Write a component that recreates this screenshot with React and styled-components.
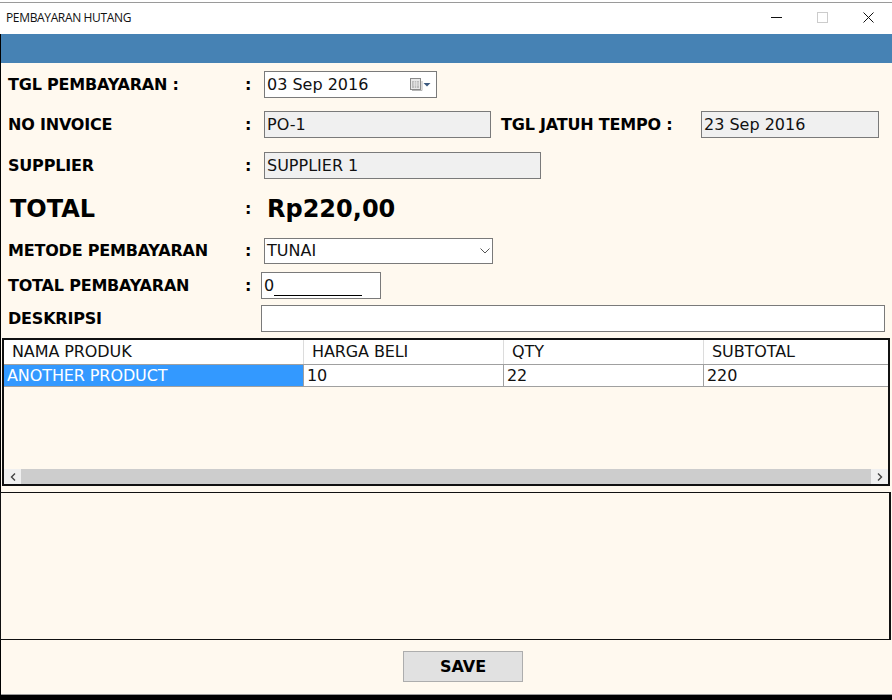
import React from "react";
import styled, { createGlobalStyle } from "styled-components";

const Global = createGlobalStyle`
  html, body { margin: 0; padding: 0; background: #000; }
  #root { width: 892px; height: 700px; overflow: hidden; }
`;
const Window = styled.div`
  width: 892px; height: 700px; display: flex; flex-direction: column;
  background: #000; font-family: "DejaVu Sans", Verdana, sans-serif; color: #000;
`;
const TopEdge = styled.div`
  height: 3px; background: #fff; border-bottom: 1px solid #9a9a9a; box-sizing: border-box;
`;
const TitleBar = styled.div`
  height: 31px; background: #fff; display: flex; align-items: center; justify-content: space-between;
  padding-left: 6px;
`;
const Title = styled.span`
  font: 400 12px/16px "Open Sans", "Noto Sans", sans-serif; letter-spacing: -0.35px; color: #111;
  margin-top: -2px;
`;
const WinControls = styled.div` display: flex; height: 100%; align-items: center; margin-right: 1px; margin-top:-3px; `;
const WinBtn = styled.div`
  width: 46px; height: 100%; display: flex; align-items: center; justify-content: center;
`;
const Content = styled.div`
  height: 660px; background: #fff9ef; margin-left: 1px; display: flex; flex-direction: column;
  border-bottom: 1px solid #9a9a9a; box-sizing: content-box;
`;
const BlueBar = styled.div` height: 29px; background: #4682b4; flex: none; `;
const Row = styled.div`
  display: flex; align-items: center; height: ${p => p.$h || 27}px; margin-top: ${p => p.$mt}px; flex: none;
`;
const Label = styled.label`
  width: 236px; padding-left: 7px; box-sizing: content-box; font-weight: 700; white-space: nowrap;
  font-size: ${p => p.$big ? 24 : 16}px; line-height: 20px; letter-spacing: ${p => p.$big ? 0 : -0.2}px;
  margin-left: ${p => p.$big ? 2 : 0}px;
  ${p => p.$big && "width: 234px;"}
`;
const Colon = styled.span`
  width: ${p => p.$w || 20}px; font-weight: 700; font-size: 16px; line-height: 20px; padding-left: 1px; box-sizing: border-box; flex: none;
`;
const Field = styled.div`
  width: ${p => p.$w}px; height: ${p => p.$h || 27}px; box-sizing: border-box; border: 1px solid #7a7a7a; flex: none;
  background: ${p => p.$ro ? "#f0f0f0" : "#fff"}; font-size: 16px; line-height: ${p => (p.$h || 27) - 6}px;
  padding: 1px 2px; display: flex; align-items: center; justify-content: space-between; white-space: nowrap;
  margin-left: ${p => p.$ml || 0}px; color: #111;
`;
const SideLabel = styled.span`
  width: 200px; margin-left: 10px; flex: none; font-weight: 700; font-size: 16px; letter-spacing: -0.2px; white-space: nowrap;
`;
const Amount = styled.span` font-weight: 700; font-size: 24px; line-height: 30px; margin-left: 3px; `;
const Mask = styled.span` display: inline-block; width: 88px; border-bottom: 1px solid #000; height: 15px; margin-left: 0; `;
const MaskWrap = styled.span` display: flex; align-items: flex-end; `;
const Grid = styled.div`
  margin: 6px 2px 0 1px; height: 148px; box-sizing: border-box; border: 2px solid #111; display: flex; flex-direction: column; flex: none;
`;
const GridBody = styled.div` flex: 1; `;
const GridRow = styled.div`
  display: grid; grid-template-columns: 300px 200px 200px 1fr; background: #fff;
  height: ${p => p.$h}px; border-bottom: 1px solid #a0a0a0; box-sizing: border-box;
`;
const HeadCell = styled.div`
  font-size: 16px; line-height: 24px; padding-left: 8px; color: #111; border-right: 1px solid #dcdcdc; letter-spacing: -0.1px;
  &:last-child { border-right: 0; }
`;
const Cell = styled.div`
  font-size: 16px; line-height: 21px; padding-left: ${p => p.$sel ? 3 : 3}px; color: ${p => p.$sel ? "#fff" : "#111"};
  background: ${p => p.$sel ? "#3399ff" : "#fff"}; border-right: 1px solid #a0a0a0; letter-spacing: -0.1px;
  &:last-child { border-right: 0; }
`;
const Scrollbar = styled.div`
  height: 15px; background: #f0f0f0; display: flex; align-items: center; flex: none;
`;
const ScrollBtn = styled.div` width: 17px; height: 100%; display: flex; align-items: center; justify-content: center; flex: none; `;
const ScrollThumb = styled.div` flex: 1; height: 100%; background: #cdcdcd; `;
const NoteBox = styled.div`
  margin: 6px 1px 0 0; margin-left: -1px; height: 148px; box-sizing: border-box; border: 1px solid #111; border-width: 1px 2px 1px 1px; flex: none;
`;
const Footer = styled.div` display: flex; justify-content: flex-start; padding-left: 402px; margin-top: 11px; flex: none; `;
const SaveBtn = styled.button`
  width: 120px; height: 31px; box-sizing: border-box; background: #e1e1e1; border: 1px solid #adadad; font: 700 16px "DejaVu Sans", Verdana, sans-serif; color: #000; padding: 0;
`;

const CalendarIcon = () => (
  <svg width="24" height="14" viewBox="0 0 24 14">
    <rect x="0.5" y="0.5" width="10" height="11" fill="#e8e8e8" stroke="#8a8a8a" />
    <rect x="2" y="3" width="7" height="7" fill="#bcbcbc" />
    <path d="M3 5h6M3 7h6M4.5 3v7M6.5 3v7" stroke="#e8e8e8" strokeWidth="0.7" />
    <path d="M2 12.5h10V3" stroke="#b5b5b5" fill="none" />
    <path d="M13.5 5h7l-3.5 3.5z" fill="#3d5a80" />
  </svg>
);
const Chevron = () => (
  <svg width="10" height="6" viewBox="0 0 10 6"><path d="M0.5 0.5L5 5L9.5 0.5" fill="none" stroke="#555" /></svg>
);
const SmallArrow = ({ right }) => (
  <svg width="6" height="8" viewBox="0 0 6 8">
    <path d={right ? "M1 0.5L4.5 4L1 7.5" : "M5 0.5L1.5 4L5 7.5"} fill="none" stroke="#444" strokeWidth="1.4" />
  </svg>
);

const headers = ["NAMA PRODUK", "HARGA BELI", "QTY", "SUBTOTAL"];

export default function App() {
  return (
    <Window>
      <Global />
      <TopEdge />
      <TitleBar>
        <Title>PEMBAYARAN HUTANG</Title>
        <WinControls>
          <WinBtn>
            <svg width="11" height="11" viewBox="0 0 11 11"><path d="M0 5.5h11" stroke="#111" /></svg>
          </WinBtn>
          <WinBtn>
            <svg width="11" height="11" viewBox="0 0 11 11"><rect x="0.5" y="0.5" width="10" height="10" fill="none" stroke="#ccc" /></svg>
          </WinBtn>
          <WinBtn>
            <svg width="11" height="11" viewBox="0 0 11 11"><path d="M0.5 0.5l10 10M10.5 0.5l-10 10" stroke="#111" /></svg>
          </WinBtn>
        </WinControls>
      </TitleBar>
      <Content>
        <BlueBar />
        <Row $mt={8}>
          <Label>TGL PEMBAYARAN :</Label>
          <Colon>:</Colon>
          <Field $w={173}>03 Sep 2016<CalendarIcon /></Field>
        </Row>
        <Row $mt={13}>
          <Label>NO INVOICE</Label>
          <Colon>:</Colon>
          <Field $w={227} $ro>PO-1</Field>
          <SideLabel>TGL JATUH TEMPO :</SideLabel>
          <Field $w={178} $ro>23 Sep 2016</Field>
        </Row>
        <Row $mt={14}>
          <Label>SUPPLIER</Label>
          <Colon>:</Colon>
          <Field $w={277} $ro>SUPPLIER 1</Field>
        </Row>
        <Row $mt={15} $h={30}>
          <Label $big>TOTAL</Label>
          <Colon>:</Colon>
          <Amount>Rp220,00</Amount>
        </Row>
        <Row $mt={14} $h={26}>
          <Label>METODE PEMBAYARAN</Label>
          <Colon>:</Colon>
          <Field $w={229} $h={26}>TUNAI<Chevron /></Field>
        </Row>
        <Row $mt={8}>
          <Label>TOTAL PEMBAYARAN</Label>
          <Colon $w={17}>:</Colon>
          <Field $w={120}><MaskWrap>0<Mask /></MaskWrap></Field>
        </Row>
        <Row $mt={6}>
          <Label>DESKRIPSI</Label>
          <Field $w={624} $ml={17} />
        </Row>
        <Grid>
          <GridBody>
            <GridRow $h={25}>
              {headers.map(h => <HeadCell key={h}>{h}</HeadCell>)}
            </GridRow>
            <GridRow $h={22}>
              <Cell $sel>ANOTHER PRODUCT</Cell>
              <Cell>10</Cell>
              <Cell>22</Cell>
              <Cell>220</Cell>
            </GridRow>
          </GridBody>
          <Scrollbar>
            <ScrollBtn><SmallArrow /></ScrollBtn>
            <ScrollThumb />
            <ScrollBtn><SmallArrow right /></ScrollBtn>
          </Scrollbar>
        </Grid>
        <NoteBox />
        <Footer><SaveBtn>SAVE</SaveBtn></Footer>
      </Content>
    </Window>
  );
}
